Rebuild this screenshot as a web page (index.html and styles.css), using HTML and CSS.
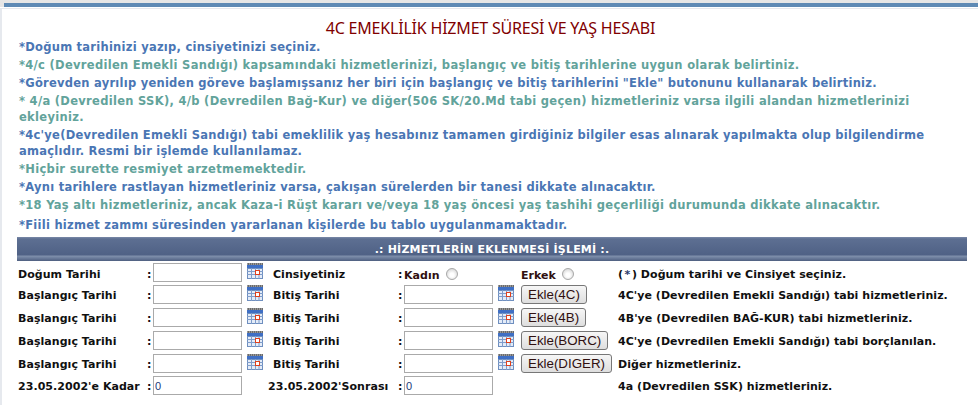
FILE: index.html
```html
<!DOCTYPE html>
<html lang="tr">
<head>
    <meta charset="UTF-8">
    <title>4C Emeklilik Hizmet Süresi ve Yaş Hesabı</title>
    <link rel="stylesheet" href="styles.css">
</head>
<body>

<svg class="svg-defs" width="0" height="0">
    <symbol id="cal" viewBox="0 0 16 16">
        <rect x="0" y="0" width="16" height="2" fill="#6b6b6b"/>
        <path d="M0 1h16" stroke="#c8c8c8" stroke-dasharray="1 1" stroke-width="1"/>
        <rect x="0" y="2" width="16" height="3" fill="#3f6fc4"/>
        <rect x="0.5" y="5.5" width="15" height="10" fill="#e4ecf8" stroke="#6f8fbf"/>
        <path d="M4.5 5v11M8.5 5v11M12 5v11M0 8.5h16M0 11.5h16" stroke="#7f9dcb" stroke-width="1" fill="none"/>
        <rect x="8.5" y="7.5" width="4" height="4" fill="#fff" stroke="#e0401c"/>
    </symbol>
</svg>

<div class="topbar"><div class="topbar-line"></div></div>

<div class="page">
    <h1 class="title">4C EMEKLİLİK HİZMET SÜRESİ VE YAŞ HESABI</h1>

    <div class="notes">
        <p class="blue">*Doğum tarihinizi yazıp, cinsiyetinizi seçiniz.</p>
        <p class="green">*4/c (Devredilen Emekli Sandığı) kapsamındaki hizmetlerinizi, başlangıç ve bitiş tarihlerine uygun olarak belirtiniz.</p>
        <p class="blue">*Görevden ayrılıp yeniden göreve başlamışsanız her biri için başlangıç ve bitiş tarihlerini "Ekle" butonunu kullanarak belirtiniz.</p>
        <p class="green">* 4/a (Devredilen SSK), 4/b (Devredilen Bağ-Kur) ve diğer(506 SK/20.Md tabi geçen) hizmetleriniz varsa ilgili alandan hizmetlerinizi ekleyiniz.</p>
        <p class="blue">*4c'ye(Devredilen Emekli Sandığı) tabi emeklilik yaş hesabınız tamamen girdiğiniz bilgiler esas alınarak yapılmakta olup bilgilendirme amaçlıdır. Resmi bir işlemde kullanılamaz.</p>
        <p class="green">*Hiçbir surette resmiyet arzetmemektedir.</p>
        <p class="blue">*Aynı tarihlere rastlayan hizmetleriniz varsa, çakışan sürelerden bir tanesi dikkate alınacaktır.</p>
        <p class="green">*18 Yaş altı hizmetleriniz, ancak Kaza-i Rüşt kararı ve/veya 18 yaş öncesi yaş tashihi geçerliliği durumunda dikkate alınacaktır.</p>
        <p class="blue last">*Fiili hizmet zammı süresinden yararlanan kişilerde bu tablo uygulanmamaktadır.</p>
    </div>

    <div class="panel-head">.: HİZMETLERİN EKLENMESİ İŞLEMİ :.</div>

    <div class="form-row first">
        <span class="lbl">Doğum Tarihi</span><span class="colon">:</span>
        <input class="field" type="text">
        <svg class="cal"><use href="#cal"/></svg>
        <span class="lbl2">Cinsiyetiniz</span><span class="colon">:</span>
        <div class="gender">
            <span class="g-kadin">Kadın <i class="radio"></i></span>
            <span class="g-erkek">Erkek <i class="radio"></i></span>
        </div>
        <span class="desc">(<span class="star">*</span>) Doğum tarihi ve Cinsiyet seçiniz.</span>
    </div>
    <div class="form-row">
        <span class="lbl">Başlangıç Tarihi</span><span class="colon">:</span>
        <input class="field" type="text">
        <svg class="cal"><use href="#cal"/></svg>
        <span class="lbl2">Bitiş Tarihi</span><span class="colon">:</span>
        <input class="field" type="text">
        <svg class="cal"><use href="#cal"/></svg>
        <div class="btn-cell"><button class="btn">Ekle(4C)</button></div>
        <span class="desc">4C'ye (Devredilen Emekli Sandığı) tabi hizmetleriniz.</span>
    </div>
    <div class="form-row">
        <span class="lbl">Başlangıç Tarihi</span><span class="colon">:</span>
        <input class="field" type="text">
        <svg class="cal"><use href="#cal"/></svg>
        <span class="lbl2">Bitiş Tarihi</span><span class="colon">:</span>
        <input class="field" type="text">
        <svg class="cal"><use href="#cal"/></svg>
        <div class="btn-cell"><button class="btn">Ekle(4B)</button></div>
        <span class="desc">4B'ye (Devredilen BAĞ-KUR) tabi hizmetleriniz.</span>
    </div>
    <div class="form-row">
        <span class="lbl">Başlangıç Tarihi</span><span class="colon">:</span>
        <input class="field" type="text">
        <svg class="cal"><use href="#cal"/></svg>
        <span class="lbl2">Bitiş Tarihi</span><span class="colon">:</span>
        <input class="field" type="text">
        <svg class="cal"><use href="#cal"/></svg>
        <div class="btn-cell"><button class="btn">Ekle(BORC)</button></div>
        <span class="desc">4C'ye (Devredilen Emekli Sandığı) tabi borçlanılan.</span>
    </div>
    <div class="form-row">
        <span class="lbl">Başlangıç Tarihi</span><span class="colon">:</span>
        <input class="field" type="text">
        <svg class="cal"><use href="#cal"/></svg>
        <span class="lbl2">Bitiş Tarihi</span><span class="colon">:</span>
        <input class="field" type="text">
        <svg class="cal"><use href="#cal"/></svg>
        <div class="btn-cell"><button class="btn">Ekle(DIGER)</button></div>
        <span class="desc">Diğer hizmetleriniz.</span>
    </div>
    <div class="form-row last">
        <span class="lbl">23.05.2002'e Kadar</span><span class="colon">:</span>
        <input class="field" type="text" value="0">
        <span class="lbl2 shifted">23.05.2002'Sonrası</span><span class="colon">:</span>
        <input class="field" type="text" value="0">
        <span class="desc pushed">4a (Devredilen SSK) hizmetleriniz.</span>
    </div>
</div>

</body>
</html>
```

FILE: styles.css
```css
body {
    margin: 0;
    background-color: #fff;
    font-family: "DejaVu Sans", Verdana, sans-serif;
    font-size: 11px;
}

.svg-defs {
    display: block;
    height: 0;
}

.topbar {
    height: 5px;
    border-top: 3px solid #e6e6e6;
    border-bottom: 1px solid #e6e9ee;
}

.topbar-line {
    height: 4px;
    border-left: 4px solid #e6e6e6;
    background-color: #5e8ab5;
}

.page {
    margin-left: 2px;
    padding: 9px 0 0 15px;
    width: 950px;
    height: 387px;
    box-shadow: -2px 0 0 #e6e9ee;
}

.title {
    margin: 0;
    font-family: "Noto Sans", Tahoma, sans-serif;
    font-weight: normal;
    font-size: 16px;
    line-height: 21px;
    color: #800000;
    text-align: center;
    letter-spacing: -0.2px;
    padding-right: 3px;
}

.notes {
    font-size: 11.5px;
    font-weight: bold;
    line-height: 16px;
    letter-spacing: 0.25px;
}

.notes p {
    margin: 0 0 2px;
    padding-left: 2px;
}

.notes p.last {
    margin-top: 4px;
    margin-bottom: 4px;
}

.blue {
    color: #4a76b4;
}

.notes .green {
    color: #62a39b;
    letter-spacing: 0.3px;
}

.panel-head {
    height: 24px;
    line-height: 25px;
    text-align: center;
    color: #fff;
    font-weight: bold;
    letter-spacing: 0.2px;
    background: linear-gradient(#7a8aa8 0, #5d6f92 2px, #4f6185 18px, #8090ac 19px, #6c7d9c 21px, #4f5f80 24px);
}

.form-row {
    display: flex;
    align-items: center;
    height: 23px;
    color: #101010;
    font-weight: bold;
    letter-spacing: 0.05px;
}

.form-row.first {
    box-sizing: border-box;
    height: 22px;
    padding-top: 1px;
}

.form-row.last {
    box-sizing: border-box;
    height: 22px;
    padding-bottom: 1px;
}

/* text sits a little lower than the inputs next to it */
.lbl,
.lbl2,
.colon,
.desc,
.gender {
    padding-top: 2px;
}

.form-row.first .lbl,
.form-row.first .lbl2,
.form-row.first .colon,
.form-row.first .desc,
.form-row.first .gender {
    padding-top: 4px;
}

.lbl {
    width: 130px;
    padding-left: 1px;
    box-sizing: border-box;
    flex: none;
}

.lbl2 {
    width: 125px;
    margin-left: 10px;
    flex: none;
}

.lbl2.shifted {
    margin-left: 26px;
    width: 130px;
}

.colon {
    width: 6px;
    flex: none;
}

.field {
    width: 89px;
    height: 19px;
    margin: 0;
    padding: 0 1px;
    box-sizing: border-box;
    border: 1px solid #aaa;
    background-color: #fff;
    font-family: "Liberation Sans", Arial, sans-serif;
    font-size: 11px;
    color: #1a3a7a;
    flex: none;
}

.cal {
    width: 16px;
    height: 16px;
    margin: -4px 0 0 5px;
    flex: none;
}

.gender {
    width: 214px;
    display: flex;
    flex: none;
    color: #301010;
}

.g-kadin {
    width: 117px;
}

.radio {
    display: inline-block;
    width: 12px;
    height: 12px;
    margin-left: 2px;
    box-sizing: border-box;
    border: 1px solid #a8a8a8;
    border-radius: 50%;
    background: radial-gradient(circle at 50% 60%, #fff 25%, #d4d4d4 85%);
    vertical-align: -1px;
}

.btn-cell {
    width: 97px;
    margin-left: 7px;
    flex: none;
}

.btn {
    display: block;
    height: 19px;
    padding: 0 6px;
    border: 1px solid #777;
    border-radius: 3px;
    background: linear-gradient(#f6f6f6, #dedede);
    font-family: "Liberation Sans", Arial, sans-serif;
    font-size: 13.33px;
    line-height: 16px;
    color: #301010;
    cursor: pointer;
}

.desc {
    flex: none;
    white-space: nowrap;
}

.desc.pushed {
    margin-left: 125px;
}

.star {
    margin: 0 1.5px;
    color: #2a3a6a;
}
```
